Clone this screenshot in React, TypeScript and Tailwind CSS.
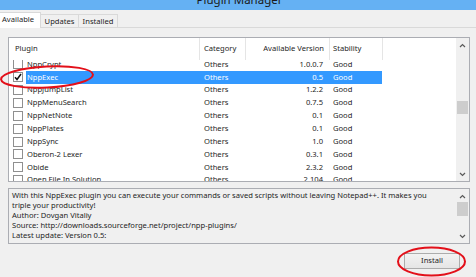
import React from "react";

const rows: [string, string, string, string][] = [
  ["NppCrypt", "Others", "1.0.0.7", "Good"],
  ["NppExec", "Others", "0.5", "Good"],
  ["NppJumpList", "Others", "1.2.2", "Good"],
  ["NppMenuSearch", "Others", "0.7.5", "Good"],
  ["NppNetNote", "Others", "0.1", "Good"],
  ["NppPlates", "Others", "0.1", "Good"],
  ["NppSync", "Others", "1.0", "Good"],
  ["Oberon-2 Lexer", "Others", "0.3.1", "Good"],
  ["Obide", "Others", "2.3.2", "Good"],
  ["Open File In Solution", "Others", "2.104", "Good"],
];

function Chevron({ up }: { up: boolean }) {
  return (
    <svg width="7" height="5" viewBox="0 0 7 5">
      <polyline
        points={up ? "1,4 3.5,1.5 6,4" : "1,1 3.5,3.5 6,1"}
        fill="none"
        stroke="#5a5a5a"
        strokeWidth="1.2"
      />
    </svg>
  );
}

function Check() {
  return (
    <svg width="8" height="8" viewBox="0 0 8 8">
      <polyline points="1,4.2 3,6.5 7,1" fill="none" stroke="#111" strokeWidth="1.5" />
    </svg>
  );
}

export default function App() {
  return (
    <div className="w-[476px] h-[277px] bg-[#f0f0f0] overflow-hidden relative font-['Noto_Sans',sans-serif] text-[7.6px] text-[#1e1e1e]">
      {/* title bar */}
      <div className="h-[10px] bg-[#65b1f3] overflow-hidden flex justify-center">
        <span className="text-[11.5px] leading-[12px] mt-[-6.5px] ml-[3px] text-[#1a1a1a] whitespace-nowrap">
          Plugin Manager
        </span>
      </div>

      {/* tabs */}
      <div className="mt-[2px] h-[15px] flex items-end relative z-10">
        <div className="w-[41px] h-[16px] -mb-px bg-white border border-b-0 border-l-0 border-[#d9d9d9] pl-[2px] leading-[13px] whitespace-nowrap">
          Available
        </div>
        <div className="w-[38px] h-[13px] border border-b-0 border-l-0 border-[#d9d9d9] text-center leading-[12px] whitespace-nowrap">
          Updates
        </div>
        <div className="w-[39px] h-[13px] border border-b-0 border-l-0 border-[#d9d9d9] text-center leading-[12px] whitespace-nowrap">
          Installed
        </div>
      </div>

      {/* panel */}
      <div className="border-t border-[#d9d9d9] pt-[9px]">
        {/* list view */}
        <div className="ml-[8px] w-[462px] h-[145px] border border-[#abadb3] bg-white flex">
          <div className="w-[447px] flex flex-col overflow-hidden">
            <div className="h-[22px] shrink-0 flex items-center bg-white relative z-10">
              <div className="w-[191px] h-full border-r border-[#e5e5e5] pl-[6px] flex items-center">Plugin</div>
              <div className="w-[46px] h-full border-r border-[#e5e5e5] pl-[4px] flex items-center">Category</div>
              <div className="w-[84px] h-full border-r border-[#e5e5e5] pr-[5px] flex items-center justify-end whitespace-nowrap">
                Available Version
              </div>
              <div className="w-[53px] h-full border-r border-[#e5e5e5] pl-[3px] flex items-center">Stability</div>
              <div className="flex-1 h-full" />
            </div>
            <div className="flex-1 overflow-hidden">
              <div className="mt-[-2px]">
                {rows.map((r, i) => {
                  const sel = i === 1;
                  return (
                    <div key={r[0]} className="h-[12.86px] flex items-center">
                      <div className="w-[17px] h-full flex items-center">
                        <div className="ml-[4px] w-[10px] h-[10px] border border-[#8f8f8f] bg-white flex items-center justify-center">
                          {sel && <Check />}
                        </div>
                      </div>
                      <div
                        className={
                          sel
                            ? "w-[356px] h-full flex items-center bg-[#3399ff] text-white"
                            : "w-[356px] h-full flex items-center"
                        }
                      >
                        <div className="w-[173px] pl-[1px] whitespace-nowrap">{r[0]}</div>
                        <div className="w-[46px] pl-[5px]">{r[1]}</div>
                        <div className="w-[84px] pr-[6px] text-right">{r[2]}</div>
                        <div className="w-[53px] pl-[4px]">{r[3]}</div>
                      </div>
                    </div>
                  );
                })}
              </div>
            </div>
          </div>
          {/* scrollbar */}
          <div className="w-[13px] bg-[#f0f0f0] flex flex-col">
            <div className="h-[13px] flex items-center justify-center pt-[2px]">
              <Chevron up />
            </div>
            <div className="flex-1 pt-[50px] flex flex-col">
              <div className="h-[13px] mx-[1px] bg-[#cdcdcd]" />
            </div>
            <div className="h-[14px] flex items-center justify-center">
              <Chevron up={false} />
            </div>
          </div>
        </div>

        {/* description */}
        <div className="mt-[6px] ml-[8px] w-[462px] h-[56px] border border-[#abadb3] bg-[#f0f0f0] flex">
          <div className="w-[447px] pl-[3px] pt-[2px] leading-[9.9px] whitespace-nowrap">
            <div>
              With this NppExec plugin you can execute your commands or saved scripts without leaving Notepad++. It makes you
            </div>
            <div>triple your productivity!</div>
            <div>Author: Dovgan Vitaliy</div>
            <div>Source: http://downloads.sourceforge.net/project/npp-plugins/</div>
            <div>Latest update: Version 0.5:</div>
          </div>
          <div className="w-[13px] bg-[#f0f0f0] flex flex-col">
            <div className="h-[13px] flex items-center justify-center pt-[2px]">
              <Chevron up />
            </div>
            <div className="flex-1 flex flex-col">
              <div className="h-[14px] mx-[1px] bg-[#cdcdcd]" />
            </div>
            <div className="h-[13px] flex items-center justify-center">
              <Chevron up={false} />
            </div>
          </div>
        </div>

        {/* buttons */}
        <div className="mt-[9px] flex">
          <div className="ml-[404px] w-[56px] h-[16px] border border-[#acacac] bg-gradient-to-b from-[#f2f2f2] to-[#e5e5e5] flex items-center justify-center">
            Install
          </div>
        </div>
      </div>

      {/* annotations */}
      <svg className="absolute inset-0 pointer-events-none" width="476" height="277" viewBox="0 0 476 277">
        <ellipse cx="47" cy="77" rx="46" ry="10.5" fill="none" stroke="#e3101a" strokeWidth="2" transform="rotate(-3 47 77)" />
        <ellipse cx="431.5" cy="261.5" rx="33.5" ry="14" fill="none" stroke="#e3101a" strokeWidth="2" />
      </svg>
    </div>
  );
}
